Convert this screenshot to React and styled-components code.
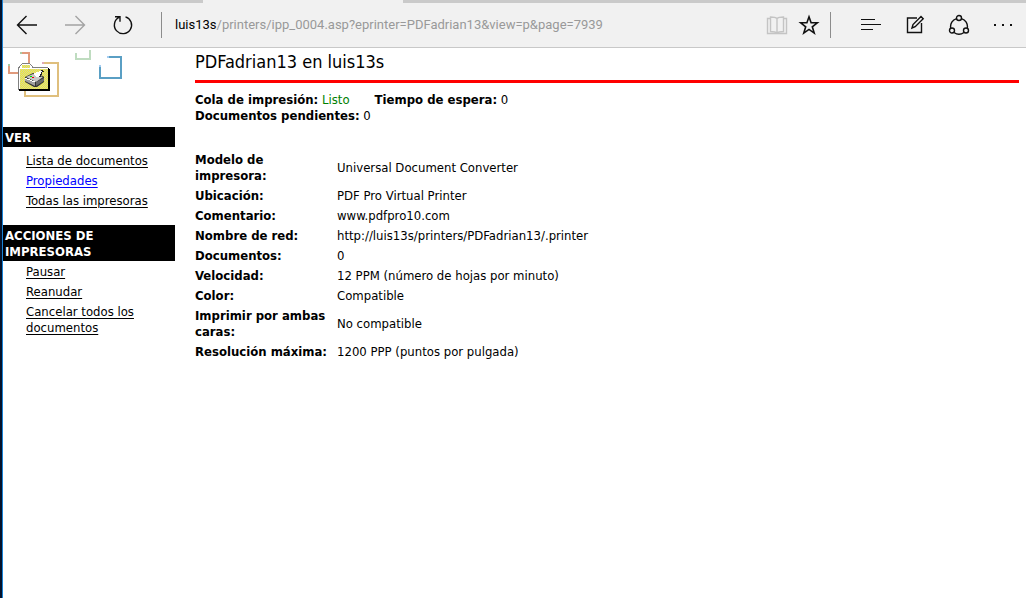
import React from "react";
import styled, { createGlobalStyle } from "styled-components";

const Global = createGlobalStyle`
  *, *::before, *::after { box-sizing: border-box; }
  body {
    margin: 0;
    background: #fff;
    color: #000;
    font: 13px/16px "DejaVu Sans Condensed", Tahoma, sans-serif;
  }
`;

const Shell = styled.div`
  min-height: 100vh;
  border-left: 2px solid #04122c;
`;

const Browser = styled.div`
  min-height: 100vh;
  border-left: 1px solid #1883d7;
  background: #fff;
`;

const TabStrip = styled.div`
  display: flex;
  height: 3px;
  background: #cacaca;
`;

const ActiveTab = styled.div`
  width: 200px;
  margin-left: 200px;
  background: #f1f1f1;
`;

const Toolbar = styled.header`
  display: flex;
  align-items: center;
  height: 45px;
  padding: 0 11px 0 12px;
  background: #f1f1f1;
  border-bottom: 1px solid #c8c8c8;
`;

const ToolButton = styled.button`
  display: flex;
  align-items: center;
  justify-content: center;
  width: 24px;
  height: 32px;
  padding: 0;
  border: 0;
  background: none;
  color: ${(p) => (p.$muted ? "#a3a3a3" : "#111")};
`;

const ToolGroup = styled.div`
  display: flex;
  align-items: center;
  gap: ${(p) => p.$gap}px;
`;

const Separator = styled.span`
  width: 1px;
  height: 26px;
  margin: ${(p) => p.$margin};
  background: #8c8c8c;
`;

const Address = styled.div`
  flex: 1;
  min-width: 0;
  overflow: hidden;
  white-space: nowrap;
  font: 13px/20px Roboto, "Open Sans", sans-serif;
  color: #999;

  b { font-weight: 400; color: #000; }
`;

const Page = styled.div`
  display: flex;
  gap: 20px;
  padding-right: 7px;
`;

const Sidebar = styled.nav`
  flex: none;
  width: 172px;
`;

const LogoArea = styled.div`
  height: 79px;
  svg { display: block; }
`;

const Heading = styled.h2`
  margin: 0;
  padding: 3px 40px 1px 2px;
  background: #000;
  color: #fff;
  font-size: 13px;
  line-height: 16px;
`;

const Menu = styled.ul`
  margin: 0;
  padding: ${(p) => p.$pad};
  list-style: none;
`;

const Item = styled.li`
  padding: 2px 0;
`;

const Link = styled.a`
  color: ${(p) => (p.$active ? "#00f" : "#000")};
  text-decoration: underline;
  text-underline-offset: 2px;
  text-decoration-thickness: 1px;
`;

const Main = styled.main`
  flex: 1;
  min-width: 0;
`;

const Title = styled.h1`
  margin: 0;
  padding: 2px 0 6px;
  border-bottom: 3px solid #f00;
  font-size: 18px;
  line-height: 24px;
  font-weight: 400;
`;

const Status = styled.div`
  margin: 9px 0 26px;
`;

const StatusRow = styled.div`
  display: flex;
  gap: 25px;
`;

const Ready = styled.span`
  color: #008000;
`;

const Details = styled.table`
  border-collapse: collapse;

  th, td {
    padding: 2px 0;
    text-align: left;
    vertical-align: middle;
  }
  th { width: 142px; padding-right: 6px; }
`;

const Icon = ({ w = 22, h = 22, children }) => (
  <svg width={w} height={h} viewBox={`0 0 ${w} ${h}`} fill="none" stroke="currentColor" strokeWidth="1.4" aria-hidden="true">
    {children}
  </svg>
);

// Every other pixel of the folder, for its two-colour dithered fill.
const checker = (x, y, w, h) => {
  let d = "";
  for (let j = y; j < y + h; j++)
    for (let i = x; i < x + w; i++) if ((i + j) % 2 === 0) d += `M${i} ${j}h1v1h-1z`;
  return d;
};
const DITHER = checker(20, 69, 28, 20) + checker(22, 65, 8, 3);

const Logo = () => (
  <svg width="130" height="52" viewBox="3 48 130 52" aria-hidden="true">
    <path fill="#e09a7c" d="M22 52h8v11h-2v-9h-6zM8 66h2v6h8v2H8z" />
    <path fill="#a9c9a4" d="M20 52h2v2h-2zM8 64h2v2H8z" />
    <path fill="#dfbf7d" d="M44 62h15v35H24v-7h2v5h31V64H44z" />
    <path fill="#e0a8b8" d="M42 62h2v2h-2z" />
    <path fill="#bfdcc0" d="M75 53h2v5h12v-8h2v10H75z" />
    <path fill="#5a9fc4" d="M109 56h13v23H99V67h2v10h19V58h-11z" />
    <path fill="#a5cdf2" d="M107 56h2v2h-2zM99 65h2v2h-2z" />
    <path fill="#808080" d="M18 67h1v-1h1v-1h1v-1h1v-1h8v1h1v1h1v1h1v1h15v23H18z" />
    <path fill="#fff" d="M19 68h1v-2h1v-1h1v-1h8v1h1v1h1v2h16v1H20v20h-1z" />
    <path fill="#f2ee30" d="M20 69h28v20H20zM22 65h8v3h-8z" />
    <path fill="#d2d0a4" d={DITHER} />
    <path fill="#000" d="M48 68h1v1h1v22H19v-2h29z" />
    <path fill="#333" d="M25 77l8-4 10 3 1 1v5l-7 5h-3l-9-5z" />
    <path fill="#c8c8c8" d="M26 77l7-3 10 3-7 5z" />
    <path fill="#a0a0a0" d="M25 78l10 4v4l-10-5z" />
    <path fill="#6a6a6a" d="M36 82l8-4v3l-8 5z" />
    <path fill="#222" d="M41 70h2v1h1v1h-2v3h-1v2h-2v-1h1v-2h1z" />
    <path fill="#fff" d="M34 73h2v-1h3v-1h3v1h-1v2h-1v2h-1v1h-3v-1h-1v-1h-1z" />
    <path fill="#fff" d="M25 78h2v1h3v1h2v1h3v1h-3v-1h-2v-1h-3v-1h-2z" />
    <path fill="#e00" d="M32 77h2v1h-2z" />
    <path fill="#0d0" d="M30 76h2v1h-2z" />
  </svg>
);

const ROWS = [
  ["Modelo de impresora:", "Universal Document Converter"],
  ["Ubicación:", "PDF Pro Virtual Printer"],
  ["Comentario:", "www.pdfpro10.com"],
  ["Nombre de red:", "http://luis13s/printers/PDFadrian13/.printer"],
  ["Documentos:", "0"],
  ["Velocidad:", "12 PPM (número de hojas por minuto)"],
  ["Color:", "Compatible"],
  ["Imprimir por ambas caras:", "No compatible"],
  ["Resolución máxima:", "1200 PPP (puntos por pulgada)"],
];

export default function App() {
  return (
    <Shell>
      <Global />
      <Browser>
        <TabStrip><ActiveTab /></TabStrip>
        <Toolbar>
          <ToolGroup $gap={24}>
            <ToolButton aria-label="Atrás">
              <Icon><path d="M21 11H2M10.500 2L1.500 11l9 9" /></Icon>
            </ToolButton>
            <ToolButton aria-label="Adelante" $muted>
              <Icon><path d="M1 11h19M11.500 2l9 9-9 9" /></Icon>
            </ToolButton>
            <ToolButton aria-label="Actualizar">
              <Icon><path d="M13.500 2.800A8.600 8.600 0 1 1 7 3.400M3 2.700h5v5" /></Icon>
            </ToolButton>
          </ToolGroup>
          <Separator $margin="0 13px 0 26px" />
          <Address><b>luis13s</b>/printers/ipp_0004.asp?eprinter=PDFadrian13&amp;view=p&amp;page=7939</Address>
          <ToolGroup $gap={8}>
            <ToolButton aria-label="Vista de lectura" $muted>
              <Icon>
                <path stroke="#c4c4c4" d="M11 4.500C9.500 3 6 3 4.500 3v14.500c2 0 5 0 6.500 1.500 1.500-1.500 4.500-1.500 6.500-1.500V3c-1.500 0-5 0-6.500 1.500zM11 4.500V19M4 4.500H1.500v15h19v-15H18" />
              </Icon>
            </ToolButton>
            <ToolButton aria-label="Agregar a favoritos">
              <Icon><path strokeWidth="1.600" d="M11 2.800l2.100 6h6.200l-5 4 1.900 6.300-5.200-3.700-5.200 3.700 1.900-6.300-5-4h6.200z" /></Icon>
            </ToolButton>
          </ToolGroup>
          <Separator $margin="0 28px 0 9px" />
          <ToolGroup $gap={20}>
            <ToolButton aria-label="Concentrador">
              <Icon><path shapeRendering="crispEdges" strokeWidth="1" d="M1 5.500h14M1 10.500h20M1 15.500h12" /></Icon>
            </ToolButton>
            <ToolButton aria-label="Crear una nota web">
              <Icon><path d="M13 4H3.500v14.500h14V9M8 14l1-3.500 8-8 2.200 2.200-8 8z" /></Icon>
            </ToolButton>
            <ToolButton aria-label="Compartir">
              <Icon>
                <circle cx="11" cy="4" r="2.500" /><circle cx="4" cy="16.500" r="2.500" /><circle cx="18" cy="16.500" r="2.500" />
                <path d="M8.500 4.600a8.300 8.300 0 0 0-5.800 9.400M13.500 4.600a8.300 8.300 0 0 1 5.800 9.400M6 18.500a8.500 8.500 0 0 0 10 0" />
              </Icon>
            </ToolButton>
            <ToolButton aria-label="Más acciones">
              <Icon><path fill="currentColor" stroke="none" d="M2 10h2v2H2zM10 10h2v2h-2zM18 10h2v2h-2z" /></Icon>
            </ToolButton>
          </ToolGroup>
        </Toolbar>
        <Page>
          <Sidebar>
            <LogoArea><Logo /></LogoArea>
            <Heading>VER</Heading>
            <Menu $pad="4px 20px 14px 23px">
              <Item><Link href="#documentos">Lista de documentos</Link></Item>
              <Item><Link href="#propiedades" $active>Propiedades</Link></Item>
              <Item><Link href="#impresoras">Todas las impresoras</Link></Item>
            </Menu>
            <Heading>ACCIONES DE IMPRESORAS</Heading>
            <Menu $pad="1px 20px 0 23px">
              <Item><Link href="#pausar">Pausar</Link></Item>
              <Item><Link href="#reanudar">Reanudar</Link></Item>
              <Item><Link href="#cancelar">Cancelar todos los documentos</Link></Item>
            </Menu>
          </Sidebar>
          <Main>
            <Title>PDFadrian13 en luis13s</Title>
            <Status>
              <StatusRow>
                <span><b>Cola de impresión:</b> <Ready>Listo</Ready></span>
                <span><b>Tiempo de espera:</b> 0</span>
              </StatusRow>
              <StatusRow><span><b>Documentos pendientes:</b> 0</span></StatusRow>
            </Status>
            <Details>
              <tbody>
                {ROWS.map(([label, value]) => (
                  <tr key={label}><th scope="row">{label}</th><td>{value}</td></tr>
                ))}
              </tbody>
            </Details>
          </Main>
        </Page>
      </Browser>
    </Shell>
  );
}
